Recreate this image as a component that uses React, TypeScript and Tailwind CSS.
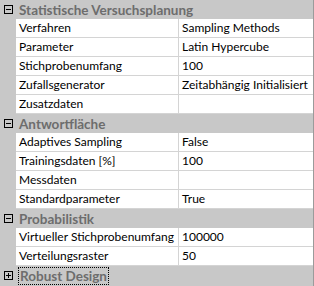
import React from 'react';

type Row = { label: string; value?: string };
type Section = { title: string; open: boolean; rows: Row[] };

const sections: Section[] = [
    {
        title: 'Statistische Versuchsplanung',
        open: true,
        rows: [
            { label: 'Verfahren', value: 'Sampling Methods' },
            { label: 'Parameter', value: 'Latin Hypercube' },
            { label: 'Stichprobenumfang', value: '100' },
            { label: 'Zufallsgenerator', value: 'Zeitabhängig Initialisiert' },
            { label: 'Zusatzdaten' },
        ],
    },
    {
        title: 'Antwortfläche',
        open: true,
        rows: [
            { label: 'Adaptives Sampling', value: 'False' },
            { label: 'Trainingsdaten [%]', value: '100' },
            { label: 'Messdaten' },
            { label: 'Standardparameter', value: 'True' },
        ],
    },
    {
        title: 'Probabilistik',
        open: true,
        rows: [
            { label: 'Virtueller Stichprobenumfang', value: '100000' },
            { label: 'Verteilungsraster', value: '50' },
        ],
    },
    { title: 'Robust Design', open: false, rows: [] },
];

const Toggle = ({ open }: { open: boolean }) => (
    <svg width="9" height="9" viewBox="0 0 9 9" className="block">
        <rect x="0.5" y="0.5" width="8" height="8" fill="none" stroke="#000" />
        <line x1="2" y1="4.5" x2="7" y2="4.5" stroke="#000" />
        {!open && <line x1="4.5" y1="2" x2="4.5" y2="7" stroke="#000" />}
    </svg>
);

const App: React.FC = () => {
    return (
        <div
            className="w-[314px] h-[286px] overflow-hidden bg-[#c8c8c8] border-r border-[#9b9b9b] text-[12px] leading-[18px] text-black"
            style={{ fontFamily: 'Lato, sans-serif' }}
        >
            {sections.map((s, i) => (
                <div key={i}>
                    <div className="flex h-[19px] items-center">
                        <div className="w-4 flex justify-center pl-px">
                            <Toggle open={s.open} />
                        </div>
                        {s.open ? (
                            <span className="pl-[3px] text-[13.5px] font-bold text-[#6d6d6d]">{s.title}</span>
                        ) : (
                            <span className="ml-[2px] px-px border border-dotted border-black text-[13.5px] font-bold text-[#6d6d6d] leading-[16px]">
                                {s.title}
                            </span>
                        )}
                    </div>
                    {s.rows.map((r, j) => (
                        <div key={j} className="flex h-[19px]">
                            <div className="w-4 shrink-0" />
                            <div className="w-[163px] shrink-0 bg-white border-b border-r border-[#d4d4d4] pl-[3px] overflow-hidden whitespace-nowrap">
                                {r.label}
                            </div>
                            <div className="flex-1 bg-white border-b border-[#d4d4d4] pl-[3px] overflow-hidden whitespace-nowrap">
                                {r.value ?? ''}
                            </div>
                        </div>
                    ))}
                </div>
            ))}
        </div>
    );
};

export default App;
